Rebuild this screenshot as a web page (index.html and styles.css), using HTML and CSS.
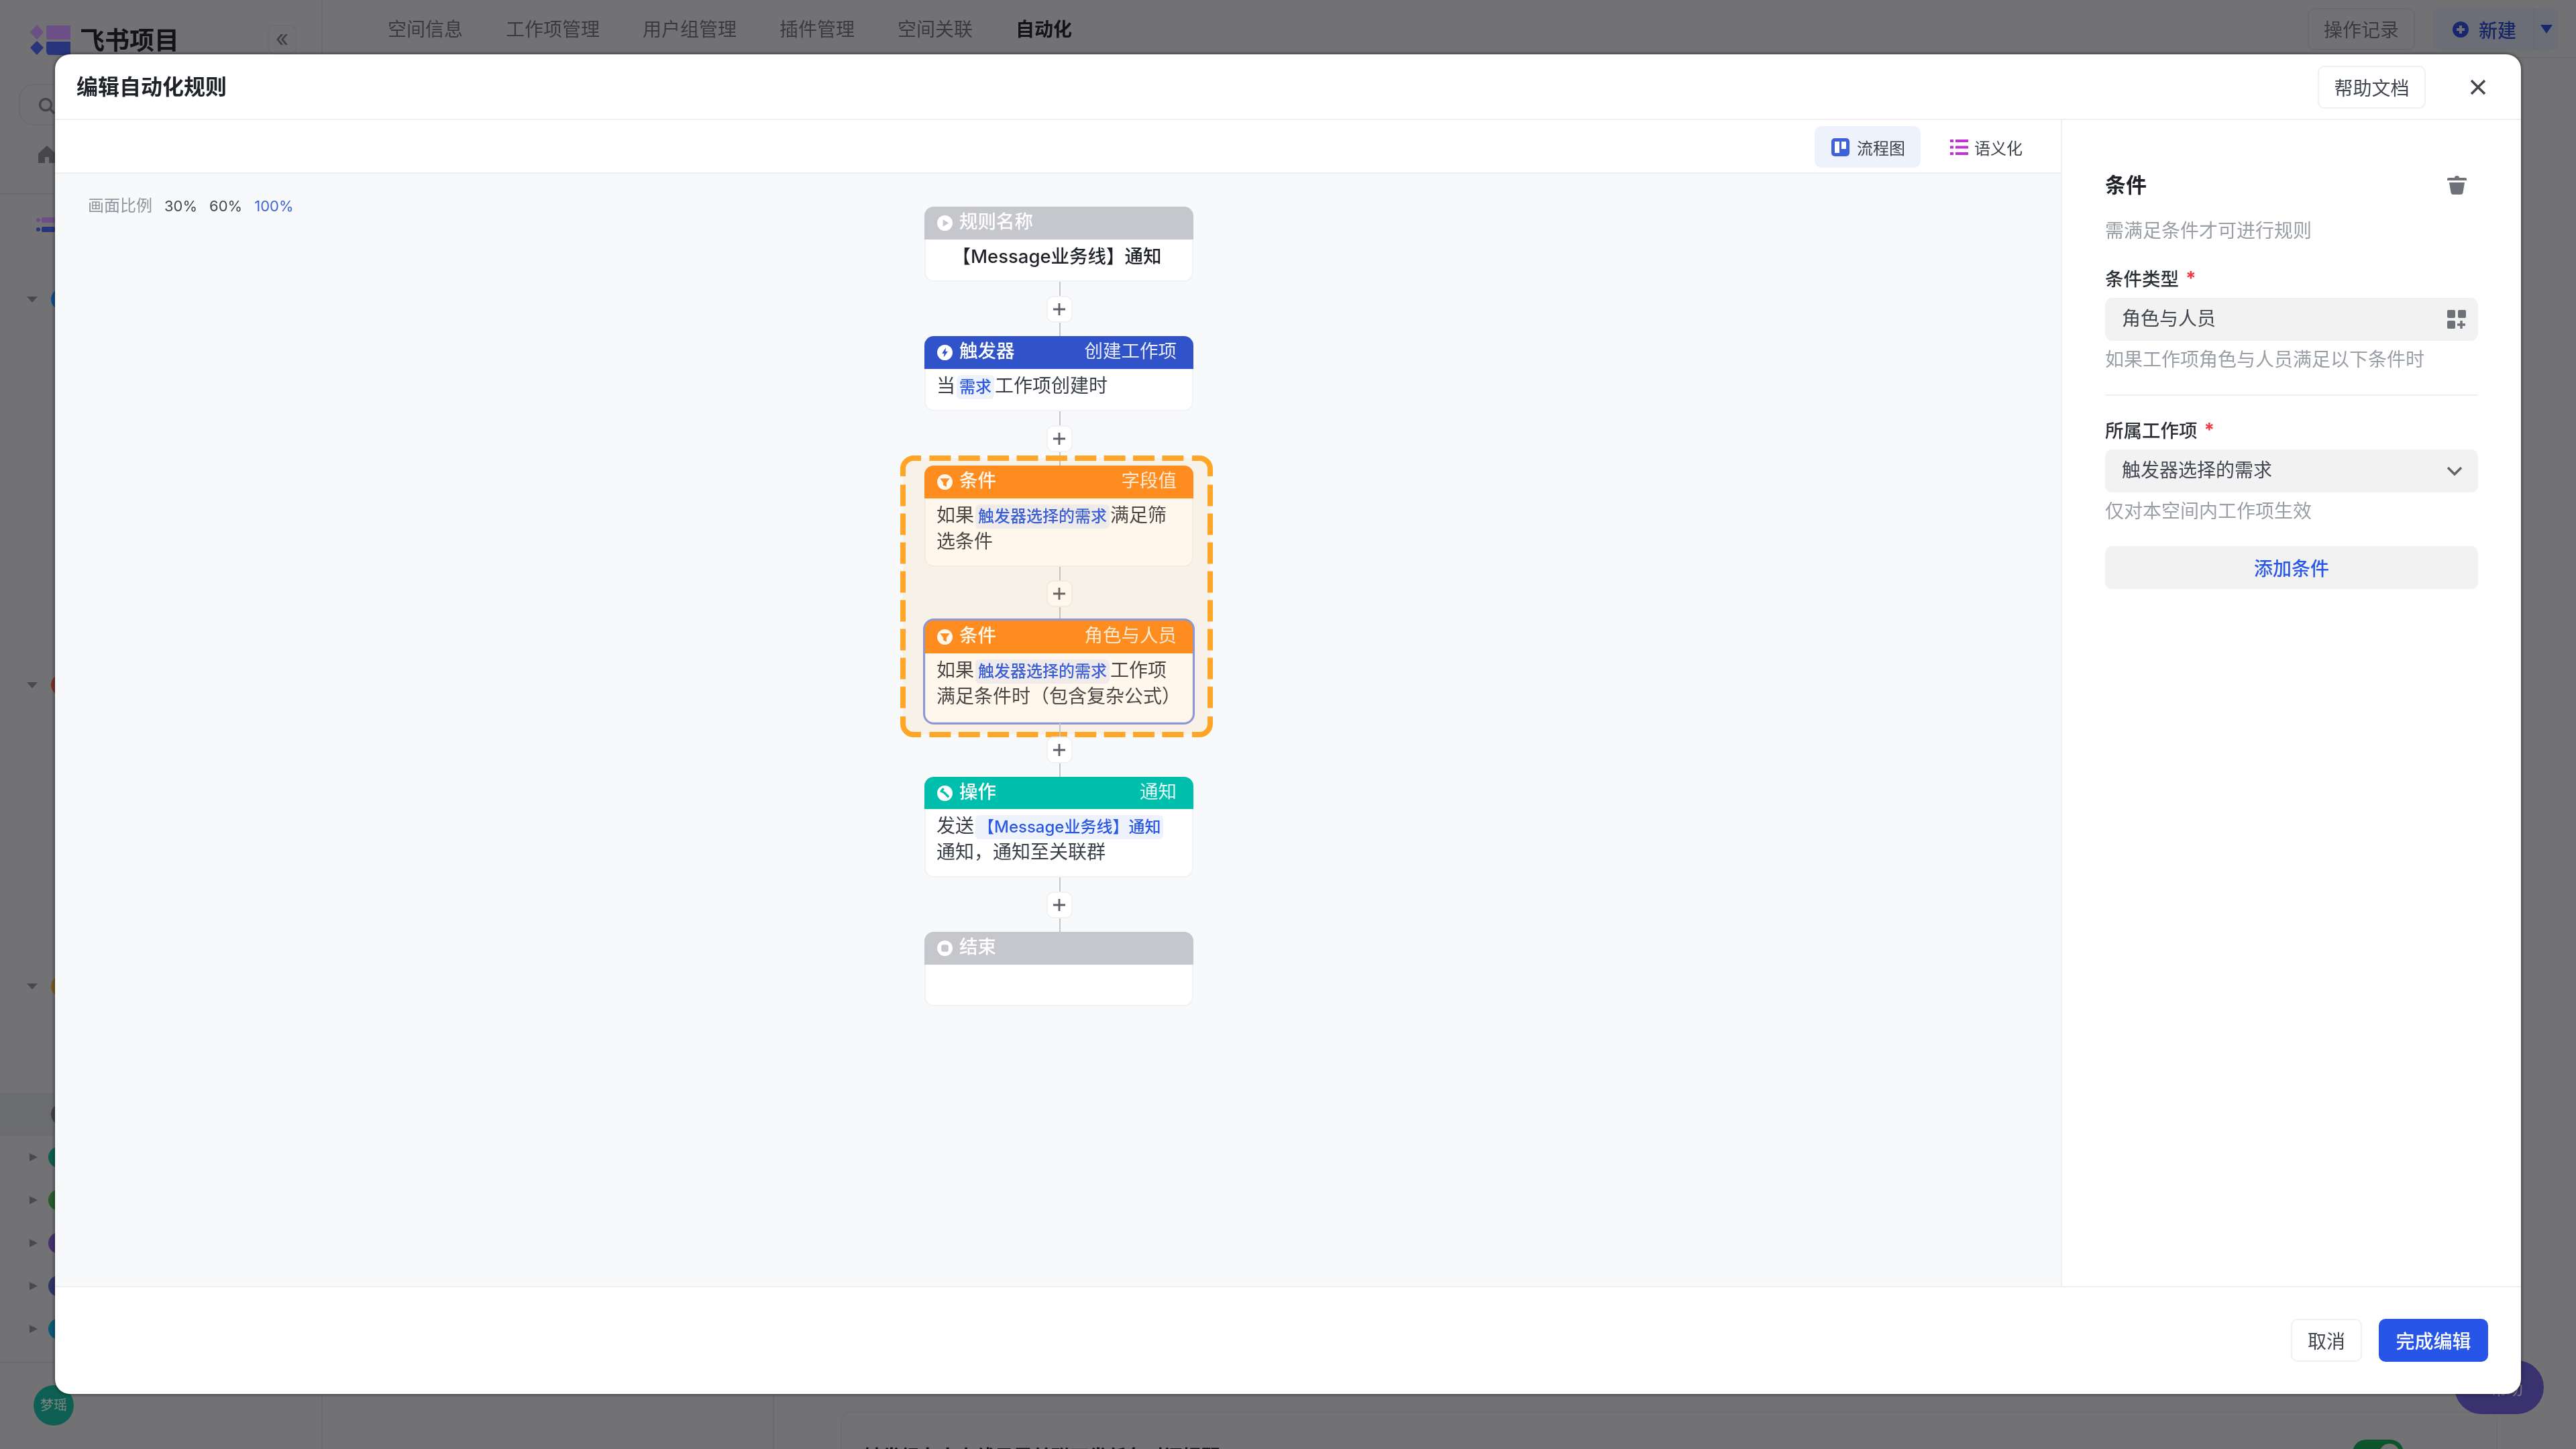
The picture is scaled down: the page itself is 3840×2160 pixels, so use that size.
FILE: index.html
```html
<!DOCTYPE html>
<html lang="zh-CN">
<head>
<meta charset="utf-8">
<title>飞书项目 - 编辑自动化规则</title>
<link rel="stylesheet" href="styles.css">
</head>
<body>
<div class="stage">
  <div class="app">
    <aside class="sidebar">
      <div class="brand">
        <svg class="logo" viewBox="0 0 60 45"><path class="lp" d="M10 0 L20 11 L10 22 L0 11Z"/><path class="lp" d="M24 3 Q24 1 26 1 H60 V22 H26 Q24 20 24 18Z"/><path class="li" d="M10 24 L20 34 L10 45 L0 34Z"/><path class="li" d="M24 27 Q24 25 26 25 H60 V45 H30 Q24 45 24 39Z"/></svg>
        <span class="brand-name">飞书项目</span>
        <span class="collapse">«</span>
      </div>
      <div class="search"><svg class="search-icon" viewBox="0 0 26 26"><circle cx="11" cy="11" r="8.5"/><path d="M17 17 L24 24"/></svg></div>
      <div class="home"><svg class="home-icon" viewBox="0 0 26 26"><path d="M13 0 L26 12 V26 H16 V17 H10 V26 H0 V12Z"/></svg></div>
      <div class="side-rule"></div>
      <div class="side-active"><svg class="mini-logo" viewBox="0 0 28 34"><circle cx="3" cy="10" r="3" class="lp"/><rect x="8" y="6" width="20" height="8" rx="2" class="lp"/><circle cx="3" cy="24" r="3" class="li"/><rect x="8" y="20" width="20" height="8" rx="2" class="li"/></svg></div>
      <div class="tree">
        <div class="row"><i class="tri down"></i><i class="dot d-blue"></i></div>
        <div class="row sec-b"><i class="tri down"></i><i class="dot d-red"></i></div>
        <div class="row sec-c"><i class="tri down"></i><i class="dot d-amber"></i></div>
        <div class="row sec-d row-on"><i class="tri none"></i><i class="dot d-dark"></i></div>
        <div class="row"><i class="tri right"></i><i class="dot d-teal"></i></div>
        <div class="row"><i class="tri right"></i><i class="dot d-green"></i></div>
        <div class="row"><i class="tri right"></i><i class="dot d-purple"></i></div>
        <div class="row"><i class="tri right"></i><i class="dot d-indigo"></i></div>
        <div class="row"><i class="tri right"></i><i class="dot d-cyan"></i></div>
      </div>
      <div class="side-foot"><span class="avatar">梦瑶</span></div>
    </aside>
    <main class="main">
      <header class="topbar">
        <nav class="tabs-nav">
          <a>空间信息</a><a>工作项管理</a><a>用户组管理</a><a>插件管理</a><a>空间关联</a><a class="on">自动化</a>
        </nav>
        <div class="top-actions">
          <button class="log-btn">操作记录</button>
          <div class="new-btn"><span class="new-main"><svg class="new-icon" viewBox="0 0 24 24"><circle cx="12" cy="12" r="12"/><path d="M12 6 V18 M6 12 H18"/></svg>新建</span><span class="new-arrow"><i></i></span></div>
        </div>
      </header>
      <div class="content">
        <div class="col-list"></div>
        <div class="col-body">
          <div class="rule-card">
            <div class="rule-title">触发经办人上线子需关联下发任务时间提醒</div>
            <span class="toggle"><i></i></span>
          </div>
        </div>
      </div>
    </main>
    <div class="help-pill"><svg class="pill-icon" viewBox="0 0 20 20"><circle cx="10" cy="10" r="8"/></svg><span>帮助</span></div>
  </div>

  <div class="mask"></div>

  <section class="modal">
    <header class="modal-head">
      <h1 class="modal-title">编辑自动化规则</h1>
      <button class="btn help-doc">帮助文档</button>
      <svg class="close" viewBox="0 0 24 24"><path d="M2 2 L22 22 M22 2 L2 22"/></svg>
    </header>
    <div class="modal-body">
      <div class="editor">
        <div class="toolbar">
          <div class="tab tab-on">
            <svg class="tab-icon" viewBox="0 0 27 27"><rect width="27" height="27" rx="5" fill="#3f62d8"/><rect x="5" y="5" width="7" height="17" fill="#fff"/><rect x="15" y="5" width="7" height="11" fill="#fff"/></svg>
            <span>流程图</span>
          </div>
          <div class="tab tab-plain">
            <svg class="tab-icon" viewBox="0 0 27 27"><g fill="#c42fd6"><rect y="2" width="5" height="4"/><rect x="8" y="2" width="19" height="4"/><rect y="11.5" width="5" height="4"/><rect x="8" y="11.5" width="19" height="4"/><rect y="21" width="5" height="4"/><rect x="8" y="21" width="19" height="4"/></g></svg>
            <span>语义化</span>
          </div>
        </div>
        <div class="canvas">
          <div class="ratio"><span class="ratio-label">画面比例</span><span>30%</span><span>60%</span><span class="ratio-on">100%</span></div>
          <div class="flow">
            <article class="card c-gray">
              <div class="card-head"><svg class="head-icon" viewBox="0 0 24 24"><circle cx="12" cy="12" r="12" fill="#fff"/><path d="M9 6.5 L18 12 L9 17.5Z"/></svg><span class="head-text">规则名称</span></div>
              <div class="card-body body-center body-short">【Message业务线】通知</div>
            </article>
            <div class="conn"><span class="plus"><svg viewBox="0 0 20 20"><path d="M10 1 V19 M1 10 H19"/></svg></span></div>
            <article class="card c-blue">
              <div class="card-head"><svg class="head-icon" viewBox="0 0 24 24"><circle cx="12" cy="12" r="12" fill="#fff"/><path d="M13.5 4.5 L7.5 13.5 H11 L10 19.5 L16.5 10.5 H13Z"/></svg><span class="head-text">触发器</span><span class="head-text head-right">创建工作项</span></div>
              <div class="card-body"><div class="line"><span>当</span><span class="tag">需求</span><span>工作项创建时</span></div></div>
            </article>
            <div class="conn"><span class="plus"><svg viewBox="0 0 20 20"><path d="M10 1 V19 M1 10 H19"/></svg></span></div>
            <div class="group">
              <article class="card c-orange">
                <div class="card-head"><svg class="head-icon" viewBox="0 0 24 24"><circle cx="12" cy="12" r="12" fill="#fff"/><path d="M4.5 6.5 H19.5 L14.5 13 V19.5 L9.5 17 V13Z"/></svg><span class="head-text">条件</span><span class="head-text head-right">字段值</span></div>
                <div class="card-body"><div class="line"><span>如果</span><span class="tag">触发器选择的需求</span><span>满足筛</span></div><div class="line">选条件</div></div>
              </article>
              <div class="conn conn-s"><span class="plus"><svg viewBox="0 0 20 20"><path d="M10 1 V19 M1 10 H19"/></svg></span></div>
              <article class="card c-orange card-selected">
                <div class="card-head head-tall"><svg class="head-icon" viewBox="0 0 24 24"><circle cx="12" cy="12" r="12" fill="#fff"/><path d="M4.5 6.5 H19.5 L14.5 13 V19.5 L9.5 17 V13Z"/></svg><span class="head-text">条件</span><span class="head-text head-right">角色与人员</span></div>
                <div class="card-body body-tall"><div class="line"><span>如果</span><span class="tag">触发器选择的需求</span><span>工作项</span></div><div class="line">满足条件时（包含复杂公式）</div></div>
              </article>
              <svg class="dash" viewBox="0 0 466 420">
                <rect class="dash-fill" x="4" y="4" width="458" height="412" rx="16"/>
                <g class="dash-stroke">
                  <path d="M4 31 V20 A16 16 0 0 1 20 4 H31"/>
                  <path d="M435 4 H446 A16 16 0 0 1 462 20 V31"/>
                  <path d="M462 389 V400 A16 16 0 0 1 446 416 H435"/>
                  <path d="M31 416 H20 A16 16 0 0 1 4 400 V389"/>
                  <path class="dashed-h" d="M43.4 4 H423"/>
                  <path class="dashed-h" d="M43.4 416 H423"/>
                  <path class="dashed-v" d="M4 43.4 V377"/>
                  <path class="dashed-v" d="M462 43.4 V377"/>
                </g>
              </svg>
            </div>
            <div class="conn conn-m"><span class="plus"><svg viewBox="0 0 20 20"><path d="M10 1 V19 M1 10 H19"/></svg></span></div>
            <article class="card c-teal">
              <div class="card-head head-low"><svg class="head-icon" viewBox="0 0 24 24"><circle cx="12" cy="12" r="12" fill="#fff"/><path class="wrench" d="M6 9.5 L10 4.5 M5 8 L11 11 L18 18"/></svg><span class="head-text">操作</span><span class="head-text head-right">通知</span></div>
              <div class="card-body"><div class="line"><span>发送</span><span class="tag">【Message业务线】通知</span></div><div class="line">通知，通知至关联群</div></div>
            </article>
            <div class="conn"><span class="plus"><svg viewBox="0 0 20 20"><path d="M10 1 V19 M1 10 H19"/></svg></span></div>
            <article class="card c-gray">
              <div class="card-head"><svg class="head-icon" viewBox="0 0 24 24"><circle cx="12" cy="12" r="12" fill="#fff"/><rect x="6.5" y="6.5" width="11" height="11" rx="2.5"/></svg><span class="head-text">结束</span></div>
              <div class="card-body body-short"></div>
            </article>
          </div>
        </div>
      </div>
      <aside class="panel">
        <div class="panel-head">
          <h2 class="panel-title">条件</h2>
          <svg class="trash" viewBox="0 0 29 28"><path d="M11 3 Q11 0 14.500 0 Q18 0 18 3 H27 Q29 3 29 5 V7 H0 V5 Q0 3 2 3Z"/><path d="M3 10 H26 L23.500 25 Q23 28 20 28 H9 Q6 28 5.500 25Z"/></svg>
        </div>
        <p class="hint hint-top">需满足条件才可进行规则</p>
        <div class="label">条件类型<span class="star">*</span></div>
        <div class="field"><span class="field-text">角色与人员</span><svg class="grid-plus" viewBox="0 0 28 28"><rect width="12" height="12" rx="2"/><rect x="16" width="12" height="12" rx="2"/><rect y="16" width="12" height="12" rx="2"/><path d="M15 22 H27 M21 16 V28" class="gp"/></svg></div>
        <p class="hint">如果工作项角色与人员满足以下条件时</p>
        <div class="panel-rule"></div>
        <div class="label">所属工作项<span class="star">*</span></div>
        <div class="field"><span class="field-text">触发器选择的需求</span><svg class="chev" viewBox="0 0 24 14"><path d="M2 2 L12 12 L22 2"/></svg></div>
        <p class="hint">仅对本空间内工作项生效</p>
        <button class="add-cond">添加条件</button>
      </aside>
    </div>
    <footer class="modal-foot">
      <button class="btn cancel">取消</button>
      <button class="btn primary">完成编辑</button>
    </footer>
  </section>
</div>
</body>
</html>
```
FILE: styles.css
```css
* { box-sizing: border-box; margin: 0; padding: 0; }
html, body { width: 3840px; height: 2160px; overflow: hidden; }
body { font-family: Inter, "Noto Sans CJK SC", sans-serif; background: #d0d0d3; color: #1f2329; }
button { font-family: inherit; cursor: pointer; }

.stage { position: relative; width: 3840px; height: 2160px; overflow: hidden; filter: blur(0.7px); }

/* dimmed page behind the dialog */
.app { display: flex; width: 3840px; height: 2160px; background: #d0d0d3; }
.sidebar { width: 481px; flex: none; border-right: 2px solid #c3c3c7; padding-top: 37px; display: flex; flex-direction: column; }
.brand { display: flex; align-items: flex-start; padding: 0 37px 0 45px; height: 44px; }
.logo { width: 60px; height: 45px; flex: none; }
.lp { fill: #c390f5; }
.li { fill: #4a5fe0; }
.brand-name { margin-left: 14px; margin-top: 2px; font-size: 37px; line-height: 44px; font-weight: 700; color: #26262b; }
.collapse { margin-left: auto; width: 43px; height: 44px; border: 2px solid #c6c6ca; border-radius: 10px; text-align: center; line-height: 36px; font-size: 34px; color: #6f7177; }
.search { margin: 44px 28px 0; height: 62px; border: 2px solid #c3c3c7; border-radius: 22px; padding: 18px 0 0 27px; }
.search-icon { display: block; width: 26px; height: 26px; fill: none; stroke: #7d7f85; stroke-width: 3.5; }
.home { padding: 30px 0 0 57px; height: 72px; }
.home-icon { display: block; width: 26px; height: 26px; fill: #80828a; }
.side-rule { margin-top: 29px; height: 2px; background: #c3c3c7; }
.side-active { margin: 28px 0 0 48px; height: 44px; padding-left: 6px; }
.mini-logo { display: block; width: 28px; height: 34px; }
.tree { margin-top: 52px; display: flex; flex-direction: column; }
.row { height: 64px; display: flex; align-items: center; padding-left: 40px; }
.sec-b { margin-top: 511px; }
.sec-c { margin-top: 385px; }
.sec-d { margin-top: 127px; }
.row-on { background: #c4c5ca; }
.tri { width: 16px; height: 12px; flex: none; display: block; }
.tri.down { border-left: 8px solid transparent; border-right: 8px solid transparent; border-top: 9px solid #85878d; height: 0; width: 0; }
.tri.right { margin-left: 4px; margin-right: -4px; border-top: 6px solid transparent; border-bottom: 6px solid transparent; border-left: 12px solid #85878d; height: 0; width: 0; }
.tri.none { visibility: hidden; }
.dot { width: 32px; height: 32px; border-radius: 50%; margin-left: 20px; display: block; flex: none; }
.d-blue { background: #1a8fff; }
.d-red { background: #e05a4d; }
.d-amber { background: #d6a83a; }
.d-dark { background: #7a7a80; }
.d-teal { background: #1ba88f; }
.d-green { background: #4aa650; }
.d-purple { background: #7e56c8; }
.d-indigo { background: #5760c0; }
.d-cyan { background: #1a9fd8; }
.side-foot { margin-top: 17px; border-top: 2px solid #c3c3c7; padding: 33px 0 0 50px; }
.avatar { display: block; width: 60px; height: 60px; border-radius: 50%; background: #1aae98; color: #e6f5f2; font-size: 20px; line-height: 60px; text-align: center; }

.main { flex: 1; display: flex; flex-direction: column; min-width: 0; }
.topbar { height: 87px; flex: none; border-bottom: 2px solid #c3c3c7; display: flex; align-items: flex-start; padding: 12px 26px 0 97px; }
.tabs-nav { display: flex; gap: 64px; font-size: 28px; line-height: 40px; color: #6a6c72; padding-top: 12px; }
.tabs-nav .on { color: #26262b; font-weight: 600; }
.top-actions { margin-left: auto; display: flex; gap: 26px; }
.log-btn { width: 160px; height: 63px; background: transparent; border: 2px solid #c3c3c7; border-radius: 10px; font-size: 28px; color: #6a6c72; padding-bottom: 2px; }
.new-btn { display: flex; height: 63px; background: #c4c9d8; border-radius: 10px; color: #2b46b8; font-size: 28px; font-weight: 500; }
.new-main { width: 152px; display: flex; align-items: center; gap: 15px; padding-left: 30px; border-right: 2px solid #bcc1d0; }
.new-icon { width: 24px; height: 24px; }
.new-icon circle { fill: #2f4ac8; }
.new-icon path { stroke: #d0d0d3; stroke-width: 4; fill: none; }
.new-arrow { width: 36px; display: flex; align-items: center; justify-content: center; }
.new-arrow i { display: block; border-left: 9px solid transparent; border-right: 9px solid transparent; border-top: 13px solid #2f4ac8; }
.content { flex: 1; display: flex; min-height: 0; }
.col-list { width: 673px; flex: none; border-right: 2px solid #c3c3c7; }
.col-body { flex: 1; padding: 2017px 117px 0 99px; }
.rule-card { height: 120px; border: 2px solid #c6c6ca; border-bottom: 0; border-radius: 14px 14px 0 0; position: relative; padding: 46px 0 0 32px; }
.rule-title { font-size: 28px; line-height: 40px; font-weight: 600; color: #26262b; width: 560px; white-space: nowrap; }
.toggle { position: absolute; top: 40px; right: 138px; width: 76px; height: 40px; border-radius: 20px; background: #169c50; }
.toggle i { position: absolute; right: 6px; top: 6px; width: 30px; height: 30px; border-radius: 50%; background: #d0d0d3; }
.help-pill { position: absolute; left: 3659px; top: 2028px; width: 133px; height: 80px; border-radius: 40px; background: #6b5bca; color: #dcd9ee; font-size: 24px; display: flex; align-items: center; gap: 8px; padding-left: 26px; }
.pill-icon { width: 20px; height: 20px; fill: none; stroke: #dcd9ee; stroke-width: 2; }

.mask { position: absolute; inset: 0; background: rgba(0, 0, 0, 0.45); }

/* dialog */
.modal { position: absolute; left: 82px; top: 81px; width: 3676px; height: 1997px; background: #fff; border-radius: 22px; box-shadow: 0 0 4px 1px rgba(0, 0, 0, 0.5); display: flex; flex-direction: column; overflow: hidden; }
.modal-head { height: 98px; flex: none; border-bottom: 2px solid #f0f0f1; display: flex; align-items: center; padding: 2px 52px 0 32px; }
.modal-title { font-size: 32px; font-weight: 600; line-height: 44px; color: #1f2329; }
.btn { border: 2px solid #f0f0f1; border-radius: 10px; background: #fff; color: #41464f; font-size: 28px; height: 64px; }
.help-doc { margin-left: auto; width: 161px; }
.close { width: 24px; height: 24px; margin-left: 66px; fill: none; stroke: #41464f; stroke-width: 3.5; }

.modal-body { flex: 1; display: flex; min-height: 0; }
.editor { flex: 1; display: flex; flex-direction: column; min-width: 0; border-right: 2px solid #f0f0f1; }
.toolbar { height: 80px; flex: none; border-bottom: 2px solid #eeeff0; display: flex; justify-content: flex-end; gap: 19px; padding: 9px 32px 0 0; }
.tab { width: 158px; height: 62px; border-radius: 10px; display: flex; align-items: center; gap: 11px; padding-left: 25px; font-size: 24px; color: #3a3f48; }
.tab-on { background: #eef2fd; }
.tab-plain { gap: 9px; }
.tab-icon { width: 27px; height: 27px; flex: none; }

.canvas { flex: 1; position: relative; background: #f8f9fb; padding: 49px 0 0 1296px; }
.ratio { position: absolute; left: 49px; top: 30px; display: flex; align-items: center; gap: 18px; font-size: 22px; line-height: 36px; color: #41464f; }
.ratio-label { color: #8f959e; font-size: 24px; }
.ratio-on { color: #3f62d8; }

.flow { width: 401px; display: flex; flex-direction: column; }
.card { width: 401px; border-radius: 14px; position: relative; }
.card-head { height: 49px; border-radius: 14px 14px 0 0; display: flex; align-items: center; padding: 0 25px 0 19px; gap: 10px; color: #fff; font-size: 27.5px; font-weight: 500; }
.head-text { line-height: 40px; margin-top: -5px; }
.head-tall { height: 50px; }
.head-low { height: 48px; }
.head-icon { width: 23px; height: 23px; flex: none; }
.head-right { margin-left: auto; font-weight: 400; opacity: 0.88; }
.card-body { background: #fff; border: 2px solid #f1f2f5; border-top: 0; border-radius: 0 0 14px 14px; min-height: 63px; padding: 6px 12px 16px 16px; font-size: 28px; line-height: 39px; color: #3a3f48; }
.line { white-space: nowrap; height: 39px; }
.body-short { min-height: 62px; }
.body-tall { min-height: 104px; }
.body-center { text-align: center; color: #1f2329; font-weight: 500; white-space: nowrap; padding-left: 14px; padding-right: 20px; font-size: 27.5px; }
.c-gray .card-head { background: #c6c7cc; }
.c-gray .head-icon path, .c-gray .head-icon rect { fill: #c6c7cc; }
.c-blue .card-head { background: #3053c9; }
.c-blue .head-icon path { fill: #3053c9; }
.c-orange .card-head { background: #ff8a1f; }
.c-orange .head-icon path { fill: #ff8a1f; }
.c-teal .card-head { background: #00c0ad; }
.c-teal .head-icon path { fill: none; stroke: #00c0ad; stroke-width: 3.5; }
.card-selected { outline: 3px solid #8296e8; outline-offset: -1px; }
.tag { display: inline-block; height: 36px; line-height: 36px; padding: 0 4px; margin: 0 1px 0 2px; border-radius: 6px; background: #eef2fd; color: #2a59e6; font-size: 24px; font-weight: 500; }

.conn { height: 81px; padding-left: 1px; display: flex; align-items: center; justify-content: center; position: relative; }
.conn::before { content: ""; position: absolute; left: 50%; top: 0; bottom: 0; width: 2px; background: #c4c6cb; }
.conn-s { height: 79px; }
.conn-m { height: 80px; }
.plus { position: relative; width: 39px; height: 40px; background: #fff; border: 2px solid #f0f1f4; border-radius: 10px; display: flex; align-items: center; justify-content: center; }
.plus svg { width: 20px; height: 20px; fill: none; stroke: #5a5e66; stroke-width: 2.8; }

.group { position: relative; display: flex; flex-direction: column; }
.dash { position: absolute; left: -36px; top: -15px; width: 466px; height: 420px; pointer-events: none; }
.dash-fill { fill: rgba(255, 160, 30, 0.085); }
.dash-stroke path { fill: none; stroke: #ffa629; stroke-width: 8; }
.dash-stroke .dashed-h { stroke-dasharray: 32 11.37; }
.dash-stroke .dashed-v { stroke-dasharray: 32 11; }

/* right panel */
.panel { width: 684px; flex: none; padding: 75px 64px 0; display: flex; flex-direction: column; }
.panel-head { display: flex; align-items: center; justify-content: space-between; padding-right: 17px; height: 44px; }
.panel-title { font-size: 31px; line-height: 44px; font-weight: 600; color: #1f2329; }
.trash { width: 29px; height: 28px; fill: #6f7279; }
.hint { font-size: 28px; line-height: 40px; color: #9a9ea6; margin-top: 8px; white-space: nowrap; }
.hint-top { margin-top: 26px; }
.label { margin-top: 32px; font-size: 27.5px; line-height: 40px; font-weight: 500; color: #2b2f36; display: flex; }
.star { color: #f5363c; margin-left: 10px; font-size: 28px; line-height: 38px; font-weight: 700; }
.field { margin-top: 8px; height: 64px; background: #f2f2f3; border-radius: 10px; display: flex; align-items: center; justify-content: space-between; padding: 0 23px 0 25px; font-size: 28px; color: #41464f; }
.field-text { line-height: 40px; margin-top: -3px; }
.grid-plus { width: 28px; height: 28px; margin-right: -5px; fill: #6f7279; }
.grid-plus .gp { fill: none; stroke: #6f7279; stroke-width: 3.5; }
.chev { width: 24px; height: 14px; fill: none; stroke: #5f636b; stroke-width: 3.5; }
.panel-rule { margin-top: 32px; height: 2px; background: #f0f0f1; flex: none; }
.add-cond { margin-top: 32px; height: 64px; background: #f2f2f3; border: 0; border-radius: 10px; color: #2a59e6; font-size: 28px; font-weight: 500; }

.modal-foot { height: 161px; flex: none; border-top: 2px solid #f0f0f1; display: flex; justify-content: flex-end; gap: 25px; padding: 47px 49px 0 0; }
.cancel { width: 106px; }
.primary { width: 163px; background: #2655e8; border-color: #2655e8; color: #fff; font-weight: 500; }
```
